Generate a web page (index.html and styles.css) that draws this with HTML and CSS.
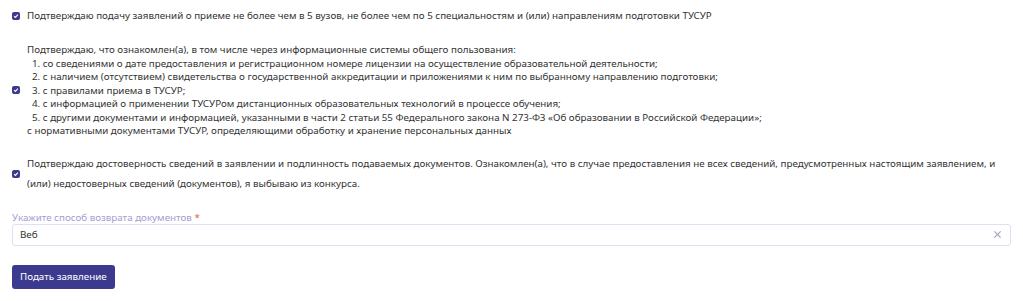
FILE: index.html
```html
<!DOCTYPE html>
<html lang="ru">
<head>
  <meta charset="UTF-8">
  <meta name="viewport" content="width=device-width, initial-scale=1.0">
  <title>Заявление</title>
  <link rel="stylesheet" href="styles.css">
</head>
<body>

<form class="app-form">
  <!-- Agreement 1 -->
  <label class="check-row check-row-first">
    <span class="box"><svg viewBox="0 0 10 10"><path d="M2.6 5.2 L4.3 6.8 L7.4 3.4" /></svg></span>
    <span class="check-text">Подтверждаю подачу заявлений о приеме не более чем в 5 вузов, не более чем по 5 специальностям и (или) направлениям подготовки ТУСУР</span>
  </label>

  <!-- Agreement 2 -->
  <label class="check-row check-row-list">
    <span class="box"><svg viewBox="0 0 10 10"><path d="M2.6 5.2 L4.3 6.8 L7.4 3.4" /></svg></span>
    <span class="check-text list-text">
      Подтверждаю, что ознакомлен(а), в том числе через информационные системы общего пользования:<br>
      <span class="item">1. со сведениями о дате предоставления и регистрационном номере лицензии на осуществление образовательной деятельности;</span><br>
      <span class="item">2. с наличием (отсутствием) свидетельства о государственной аккредитации и приложениями к ним по выбранному направлению подготовки;</span><br>
      <span class="item">3. с правилами приема в ТУСУР;</span><br>
      <span class="item">4. с информацией о применении ТУСУРом дистанционных образовательных технологий в процессе обучения;</span><br>
      <span class="item">5. с другими документами и информацией, указанными в части 2 статьи 55 Федерального закона N 273-ФЗ «Об образовании в Российской Федерации»;</span><br>
      с нормативными документами ТУСУР, определяющими обработку и хранение персональных данных
    </span>
  </label>

  <!-- Agreement 3 -->
  <label class="check-row check-row-last">
    <span class="box"><svg viewBox="0 0 10 10"><path d="M2.6 5.2 L4.3 6.8 L7.4 3.4" /></svg></span>
    <span class="check-text wide-text">Подтверждаю достоверность сведений в заявлении и подлинность подаваемых документов. Ознакомлен(а), что в случае предоставления не всех сведений, предусмотренных настоящим заявлением, и (или) недостоверных сведений (документов), я выбываю из конкурса.</span>
  </label>

  <div class="field">
    <div class="field-label">Укажите способ возврата документов <span class="req">*</span></div>
    <div class="select">
      <span class="select-value">Веб</span>
      <svg class="select-clear" viewBox="0 0 10 10"><path d="M1.5 1.5 L8.5 8.5 M8.5 1.5 L1.5 8.5" /></svg>
    </div>
  </div>

  <button type="submit" class="submit-btn">Подать заявление</button>
</form>

</body>
</html>
```

FILE: styles.css
```css
body {
  margin: 0;
  padding: 0;
  background-color: #fff;
  color: #333;
  font-family: "Noto Sans", Arial, sans-serif;
  font-size: 9.8px;
}
.app-form {
  padding: 0 12px;
}
.check-row {
  display: flex;
  align-items: center;
  gap: 7px;
}
.check-row-first {
  padding-top: 9px;
}
.check-row-list {
  margin-top: 21px;
}
.check-row-last {
  margin-top: 16px;
}
.box {
  flex: none;
  width: 8px;
  height: 8px;
  border-radius: 2px;
  background-color: #3c3a8e;
  display: flex;
}
.box svg {
  width: 8px;
  height: 8px;
  fill: none;
  stroke: #fff;
  stroke-width: 1.4;
}
.check-text {
  line-height: 13px;
}
.list-text {
  line-height: 13.5px;
}
.list-text .item {
  padding-left: 5px;
}
.wide-text {
  line-height: 20px;
}
.field {
  margin-top: 19px;
}
.field-label {
  color: #a59cd3;
  line-height: 10px;
  margin-bottom: 1px;
}
.req {
  color: #e05a5a;
}
.select {
  display: flex;
  align-items: center;
  height: 20px;
  border: 1px solid #e1dff0;
  border-radius: 3px;
  padding: 0 7px;
}
.select-value {
  flex: 1;
}
.select-clear {
  width: 9px;
  height: 9px;
  margin-right: 1px;
  fill: none;
  stroke: #a8a3c8;
  stroke-width: 1.3;
}
.submit-btn {
  margin-top: 19px;
  background-color: #3c3a8e;
  color: #fff;
  border: none;
  border-radius: 3px;
  height: 24px;
  padding: 0 8px;
  font-family: inherit;
  font-size: 9.8px;
}
```
